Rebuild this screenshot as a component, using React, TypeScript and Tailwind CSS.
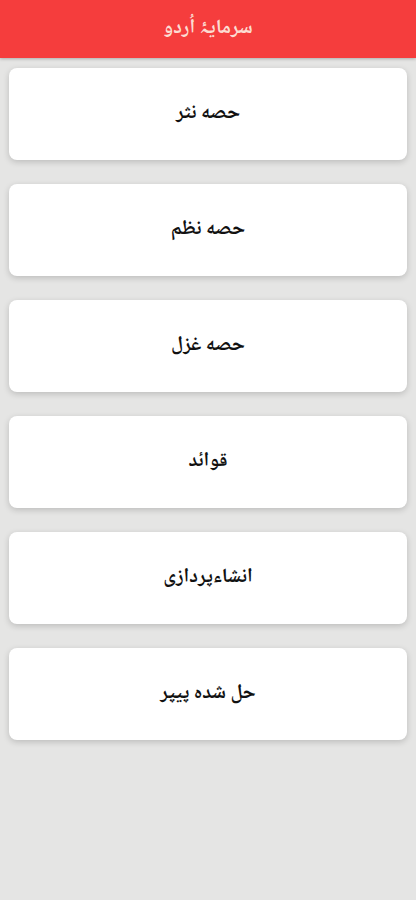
const items = ['حصه نثر', 'حصه نظم', 'حصه غزل', 'قوائد', 'انشاءپردازی', 'حل شده پیپر'];

export default function App() {
  return (
    <div className="min-h-[900px] bg-[#e5e5e4]" dir="rtl" style={{ fontFamily: '"Noto Naskh Arabic", "Noto Sans Arabic", "DejaVu Sans", sans-serif' }}>
      {/* Header */}
      <div className="h-[58px] bg-[#f53d3d] flex items-center justify-center shadow-[0_1px_3px_rgba(0,0,0,0.25)]">
        <h1 className="text-[20px] font-bold text-[#fcdcd2]">سرمایۂ اُردو</h1>
      </div>

      {/* Menu cards */}
      <div className="flex flex-col gap-6 px-[9px] pt-[10px]">
        {items.map((item) => (
          <button
            key={item}
            className="h-[92px] w-full rounded-lg bg-white flex items-center justify-center shadow-[0_2px_6px_rgba(0,0,0,0.18)]"
          >
            <span className="text-[20px] font-bold text-[#111111]">{item}</span>
          </button>
        ))}
      </div>
    </div>
  );
}
